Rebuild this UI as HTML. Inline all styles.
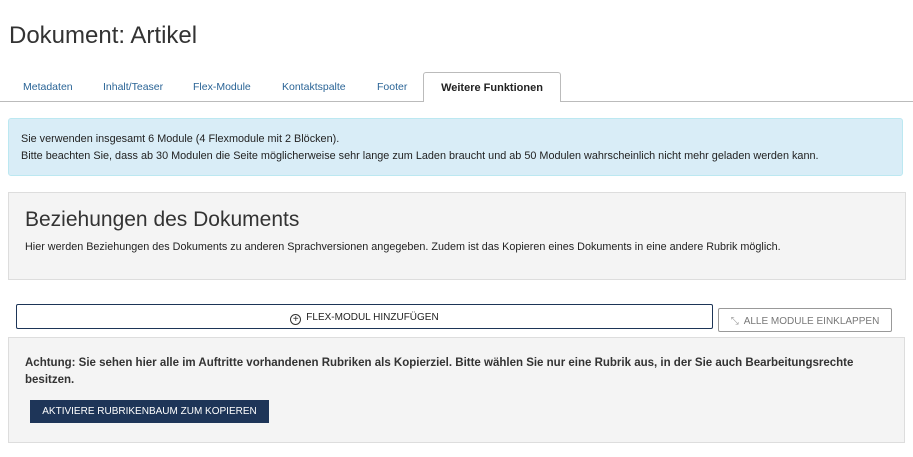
<!DOCTYPE html>
<html><head><meta charset="utf-8"><style>
body{margin:0;width:913px;height:457px;background:#fff;font-family:"Liberation Sans",sans-serif;color:#333;position:relative;overflow:hidden}
.a{position:absolute}
h1{position:absolute;left:9px;top:22px;margin:0;font-size:24px;font-weight:normal;color:#333}
.tab{position:absolute;top:81px;font-size:10.5px;color:#2a6496}
.line{position:absolute;left:0;top:101px;width:913px;height:1px;background:#bbb}
.act{position:absolute;left:423px;top:72px;width:136px;height:29px;border:1px solid #bbb;border-bottom:none;border-radius:3px 3px 0 0;background:#fff;font-size:11px;font-weight:bold;color:#222;text-align:center;line-height:30px}
.alert{position:absolute;left:8px;top:118px;width:893px;height:56px;background:#d9edf7;border:1px solid #bce8f1;border-radius:3px;font-size:10.85px;color:#222}
.panel{position:absolute;background:#f4f4f4;border:1px solid #ddd}
</style></head><body>
<h1>Dokument: Artikel</h1>
<div class="line"></div>
<div class="tab" style="left:23px">Metadaten</div>
<div class="tab" style="left:103px">Inhalt/Teaser</div>
<div class="tab" style="left:193px">Flex-Module</div>
<div class="tab" style="left:282px">Kontaktspalte</div>
<div class="tab" style="left:377px">Footer</div>
<div class="act">Weitere Funktionen</div>
<div class="alert"><div class="a" style="left:12px;top:14px">Sie verwenden insgesamt 6 Module (4 Flexmodule mit 2 Blöcken).</div><div class="a" style="left:12px;top:31px;white-space:nowrap">Bitte beachten Sie, dass ab 30 Modulen die Seite möglicherweise sehr lange zum Laden braucht und ab 50 Modulen wahrscheinlich nicht mehr geladen werden kann.</div></div>
<div class="panel" style="left:8px;top:192px;width:896px;height:86px">
<div class="a" style="left:16px;top:15px;font-size:21px;color:#333">Beziehungen des Dokuments</div>
<div class="a" style="left:16px;top:48px;font-size:10.8px;color:#222;white-space:nowrap">Hier werden Beziehungen des Dokuments zu anderen Sprachversionen angegeben. Zudem ist das Kopieren eines Dokuments in eine andere Rubrik möglich.</div>
</div>
<div class="a" style="left:16px;top:304px;width:695px;height:23px;border:1px solid #1d3557;border-radius:2px;font-size:10px;color:#222;text-align:center;line-height:26px"><span style="display:inline-block;width:9px;height:9px;border:1px solid #333;border-radius:50%;line-height:9px;font-size:10px;vertical-align:-2px;margin-right:5px">+</span>FLEX-MODUL HINZUFÜGEN</div>
<div class="a" style="left:718px;top:308px;width:172px;height:22px;border:1px solid #999;border-radius:2px;font-size:10px;color:#777;text-align:center;line-height:25px"><span style="color:#999;margin-right:5px">⤡</span>ALLE MODULE EINKLAPPEN</div>
<div class="panel" style="left:8px;top:337px;width:895px;height:104px">
<div class="a" style="left:16px;top:17px;width:860px;font-size:11.5px;font-weight:bold;color:#333;line-height:17px">Achtung: Sie sehen hier alle im Auftritte vorhandenen Rubriken als Kopierziel. Bitte wählen Sie nur eine Rubrik aus, in der Sie auch Bearbeitungsrechte besitzen.</div>
<div class="a" style="left:21px;top:62px;width:239px;height:23px;background:#1e3558;color:#fff;font-size:10px;text-align:center;line-height:24px">AKTIVIERE RUBRIKENBAUM ZUM KOPIEREN</div>
</div>
</body></html>
